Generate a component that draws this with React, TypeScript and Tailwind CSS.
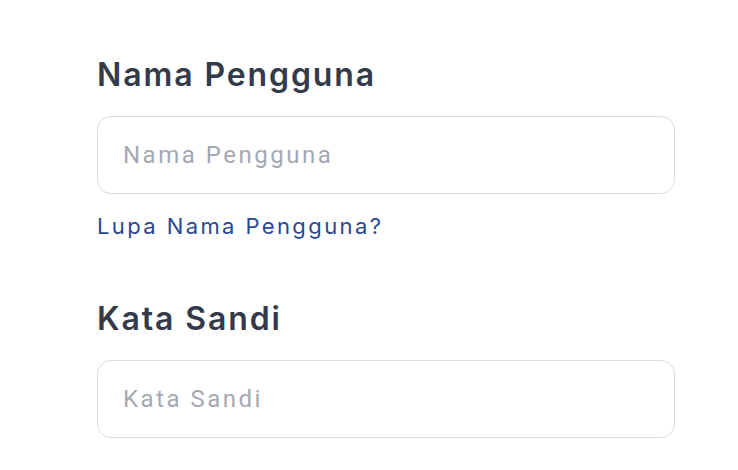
import React from "react";

function Field({ placeholder }: { placeholder: string }) {
  return (
    <div className="mt-[21px] h-[78px] rounded-[14px] border border-[#d9dbe0] bg-white flex items-center pl-[25px]">
      <span className="font-['Roboto',sans-serif] text-[24px] text-[#a3a9b3] tracking-[2.5px]">
        {placeholder}
      </span>
    </div>
  );
}

export default function App() {
  return (
    <div className="w-[738px] h-[470px] bg-white overflow-hidden">
      <div className="pl-[97px] pr-[63px] pt-[55px] flex flex-col">
        <label className="font-['Inter',sans-serif] text-[32px] leading-[40px] font-semibold text-[#333b4b] tracking-[1.9px]">
          Nama Pengguna
        </label>
        <Field placeholder="Nama Pengguna" />
        <a className="mt-[16px] font-['Inter',sans-serif] text-[22px] leading-[32px] text-[#2a4790] tracking-[2.4px]">
          Lupa Nama Pengguna?
        </a>
        <label className="mt-[57px] font-['Inter',sans-serif] text-[32px] leading-[40px] font-semibold text-[#333b4b] tracking-[1.9px]">
          Kata Sandi
        </label>
        <Field placeholder="Kata Sandi" />
      </div>
    </div>
  );
}
